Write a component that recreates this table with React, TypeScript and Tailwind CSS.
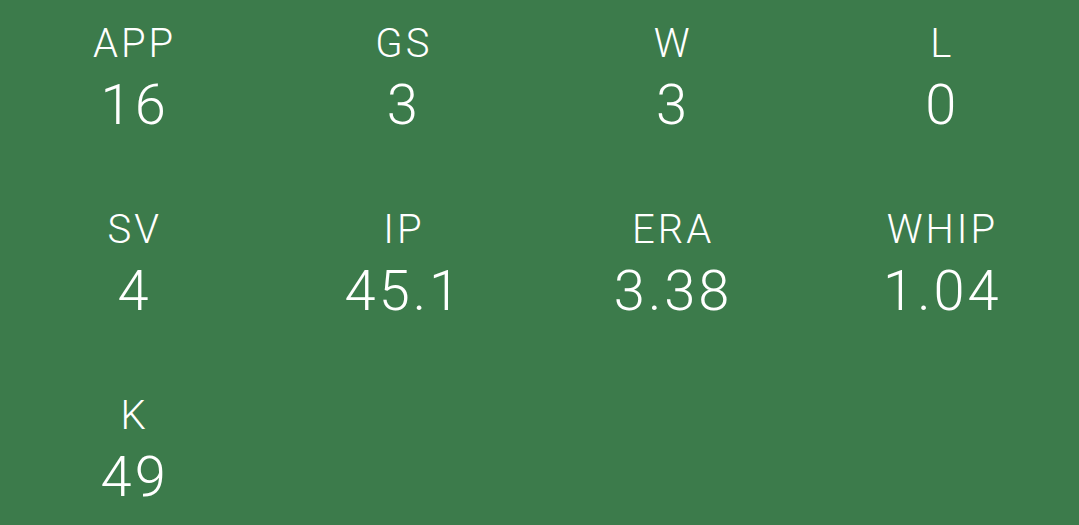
import React from "react";

const stats: [string, string][] = [
  ["APP", "16"],
  ["GS", "3"],
  ["W", "3"],
  ["L", "0"],
  ["SV", "4"],
  ["IP", "45.1"],
  ["ERA", "3.38"],
  ["WHIP", "1.04"],
  ["K", "49"],
];

export default function App() {
  return (
    <div
      className="w-[1079px] h-[525px] bg-[#3c7b4b] text-white overflow-hidden"
      style={{ fontFamily: "Roboto, 'Noto Sans', sans-serif" }}
    >
      <div className="grid grid-cols-4 pt-[20px] gap-y-[69px] pr-[2px]">
        {stats.map(([label, value]) => (
          <div key={label} className="flex flex-col items-center">
            <div className="text-[40px] leading-[48px] font-light tracking-[3px]">{label}</div>
            <div className="text-[56px] leading-[64px] font-light tracking-[3px] mt-[5px]">{value}</div>
          </div>
        ))}
      </div>
    </div>
  );
}
